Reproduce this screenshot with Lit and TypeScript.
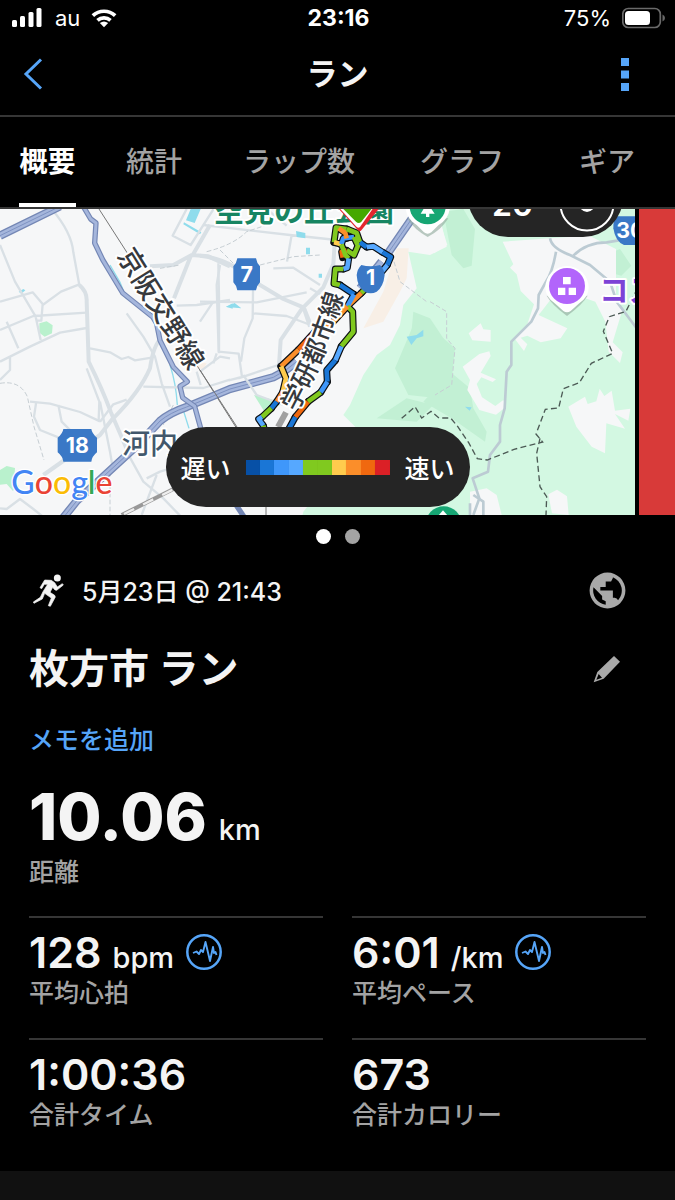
import { LitElement, html, css, svg } from 'lit';
import { customElement, property, state } from 'lit/decorators.js';
import { classMap } from 'lit/directives/class-map.js';

const PACE_COLORS = [
  '#0750a6', '#1a76d6', '#3f97fa', '#56a8ff', '#80c91f',
  '#80c91f', '#ffcb4d', '#fb8e2a', '#f0680f', '#db2026',
];

// [pace colour index, points]
const TRACK: [number, string][] = [
  [4, '440,72 408,68 402,112'],
  [6, '402,112 424,118'],
  [2, '424,118 430,100 462,96'],
  [4, '462,96 474,122 462,150 440,136'],
  [8, '440,136 425,140 428,158'],
  [7, '416,70 436,84 440,100'],
  [4, '440,72 470,84 480,112'],
  [1, '480,112 500,126'],
  [3, '500,126 520,124 548,142'],
  [1, '548,142 572,156 562,180'],
  [3, '562,180 534,214'],
  [4, '534,214 484,264'],
  [7, '484,264 442,304'],
  [4, '424,118 436,150 446,160'],
  [3, '446,160 442,188 430,192'],
  [4, '430,192 406,192 402,236 420,240'],
  [1, '420,240 462,268'],
  [2, '462,268 442,304'],
  [4, '442,304 458,320 460,380 424,424'],
  [3, '424,424 406,466'],
  [1, '406,466 380,496 382,530'],
  [2, '382,530 362,562'],
  [4, '362,562 324,590'],
  [8, '324,590 286,636'],
  [1, '286,636 262,680'],
  [7, '442,304 400,350 345,380'],
  [8, '345,380 296,434'],
  [7, '296,434 243,484'],
  [6, '243,484 258,520 248,562'],
  [7, '248,562 230,590'],
  [1, '230,590 214,610'],
  [4, '214,610 186,636'],
  [3, '186,636 176,642 190,662'],
  [4, '190,662 196,684'],
];

@customElement('activity-map')
export class ActivityMap extends LitElement {
  static styles = css`
    :host {
      display: block;
      height: 306px;
    }
    svg {
      display: block;
      width: 100%;
      height: 100%;
      font-family: Inter, 'Noto Sans CJK JP', sans-serif;
    }
    .land { fill: #f6f7f8; }
    .forest { fill: #d3f8e2; }
    .forest-dark { fill: #c2f0d4; }
    .park { fill: #b9f1cd; }
    .sand { fill: #f8efe6; }
    .water { fill: #8fdcec; }
    .stream { fill: none; stroke: #8fdcec; stroke-width: 4; }
    .road { fill: none; stroke: #d9e0e5; stroke-width: 7; stroke-linejoin: round; }
    .road.wide { stroke-width: 12; }
    .road.hill { stroke: #bccbd3; stroke-width: 8; }
    .highway { fill: none; stroke: #7487b5; stroke-width: 25; stroke-linejoin: round; }
    .highway.fill { stroke: #a5b6dc; stroke-width: 17; }
    .highway.thin { stroke-width: 16; }
    .highway.thin.fill { stroke-width: 9; }
    .median { fill: none; stroke: #7f93c2; stroke-width: 3; }
    .rail { fill: none; stroke: #777; stroke-width: 3; }
    .border { fill: none; stroke: #4c5a55; stroke-width: 4; stroke-dasharray: 18 10; }
    .trail { fill: none; stroke: #c6ced3; stroke-width: 3; stroke-dasharray: 14 7; }
    .outline { fill: none; stroke: #0b0f14; stroke-width: 21; stroke-linejoin: round; stroke-linecap: round; }
    .track { fill: none; stroke-width: 14; stroke-linejoin: round; }
    .label {
      font-weight: 500;
      fill: #36393d;
      stroke: #fff;
      stroke-width: 12;
      stroke-linejoin: round;
      paint-order: stroke;
    }
    .label.rail-name { font-size: 82px; text-anchor: middle; }
    .label.line-name { font-size: 76px; }
    .label.town { font-size: 84px; fill: #42586c; }
    .label.place { font-size: 90px; font-weight: 700; fill: #178562; }
    .label.shop { font-size: 88px; font-weight: 700; fill: #7c43d6; }
    .shield { fill: #3a78c6; }
    .number { font-size: 64px; font-weight: 700; fill: #fff; text-anchor: middle; }
    .logo {
      font-family: Lato, sans-serif;
      font-size: 96px;
      font-weight: 500;
      stroke: #fff;
      stroke-width: 8;
      paint-order: stroke;
    }
    .b { fill: #4285f4; }
    .r { fill: #ea4335; }
    .y { fill: #fbbc05; }
    .g { fill: #34a853; }
    .white { fill: #fff; }
    .poi { fill: #16a673; }
    .poi.purple { fill: #b265fb; }
    .pin-shadow { fill: #8fa89b; opacity: 0.6; }
    .pin-edge { fill: #e3262f; }
    .pin { fill: #45a800; }
  `;

  private _west() {
    return svg`
      <path class="park" d="M118 355l22-6 18 12-2 24-22 10-16-12zM0 795l20-12 25 6-2 30 15 28-20 10-18-20-20 2zM762 570l40 10 50 14-30 14-30 10z" />
      <path class="water" d="M572 12h30l-18 42-26-8zM552 52l52 30-4 6-50-30zM56 260l14-8 6 4-12 10zM678 305l20-10v16z" />
      <path class="stream" d="M330 180l30 52 20 50M510 480q18 55 22 120M545 600l22 70" />
      <path class="road" d="M155 12q60 70 65 130l18 98M0 120l45 110 62 105 15 70M0 290l98-28 30 35-4 50-16 0M0 375l100-42 160-10M128 300l55-40 55-22M20 350l35 80M0 470l30-15v40l-30 30M30 455l60-30 90-42 80-14M90 590l60 6 90 25 60 28M108 595l-6 40 18 40 70 28M175 600l10 50 40 40M270 430l60 12 35 20 20-6 20 10 50-8M380 325l50 70 35 60 20 80 25 70M300 650l40-52 40-14M430 545l180 4 80-25M0 910l20 2 40-30 40 30 50 40M380 740l50 90 60 50 50 52M440 820l40-20 50-15M560 12l-42 80 54 28 70-110M655 175l2 100v170M530 302l60-2 100-15M600 500l60-45 30 5M590 500l12 40" />
      <path class="road" d="M260 490l38 100-2 55M300 590l30 150 10 60M425 930l45-120" />
      <path class="road wide" d="M238 240q24 20 22 50l6 180q40 80 66 150l56 130M340 640q80-80 110-150 10-70 34-90M130 810l170-120 40-52M450 184l70-4 55-30 50 4 65 30M572 154l-50 126M630 60l-54 94" />
      <path class="trail" d="M0 535q60-10 82 40l20 90 30 100M520 600l-30 60M330 800v130M480 190l60-10" />
      <path class="rail" d="M297 12l90 140M590 480l120 190" />
      <path class="highway" d="M0 92L180 4M190 938l40-50 180-165 70-75q30-25 80-42l130-54 130-35q40-20 70-47" />
      <path class="highway fill" d="M0 92L180 4M190 938l40-50 180-165 70-75q30-25 80-42l130-54 130-35q40-20 70-47" />
      <path class="median" d="M0 92L180 4M190 938l40-50 180-165 70-75q30-25 80-42l130-54 130-35q40-20 70-47" />
      <path class="highway thin" d="M252 8l20 34 16 12-4 60 24 50 60 100 90 72 12 20 10 50 40 80 42 44-22 14 8 34 36 26 22 80" />
      <path class="highway thin fill" d="M252 8l20 34 16 12-4 60 24 50 60 100 90 72 12 20 10 50 40 80 42 44-22 14 8 34 36 26 22 80" />
      <path d="M365 930l160-80" stroke="#999" stroke-width="12" />
      <path d="M372 927l150-75" stroke="#eee" stroke-width="7" stroke-dasharray="34 30" />
    `;
  }

  private _town() {
    return svg`
      <path class="road" d="M60 180l-10 60 6 200 60 6 10 70-40 10M0 290l170 2 150-30M10 60l260 30 140 15M275 90l-14 80M160 190l-2 150-25 60-10 70M50 445l-10 30M160 325l100 8 80 30M235 480l-60 20-60 20M315 310l28 70M220 190l60-2 80 52M200 12l60 50M330 250l70 40M130 510l40 60 80 30M0 350l40-60" />
      <path class="road wide" d="M0 152q90 10 150 70l100 60 60 25 60-60 30-70 6-90M310 305l-68 100-6 90M310 305l20 60" />
      <path class="trail" d="M20 140q80-20 120-60l60-20M60 135l60 60 160-40 80-5M570 130l30 100 80 60" />
      <path class="water" d="M288 78l28 6 0 16-26-4zM318 128h12v20h-12zM78 306l26-12 20 16zM356 206h10v12h-10z" />
      <path class="highway" d="M560 150L650 20M545 170L480 250" />
      <path class="highway fill" d="M560 150L650 20M545 170L480 250" />
      <path class="median" d="M560 150L650 20" />
      <path d="M258 622l-24 44" stroke="#a0a0a0" stroke-width="18" />
      <path class="rail" d="M0 495l120 185M198 905v30" />
      <path class="highway thin" d="M105 895l30 45" />
    `;
  }

  private _hills() {
    return svg`
      <path class="forest-dark" d="M40 20l60-8 35 60-10 110-25 8-35-40zM480 160l40-8 50-20 34 50-30 30-50-14zM-50 360l90 40 35 30-10 100-40 50-90-10-40-80zM-20 590l80-90 60 50 10 60 40 70-5 30-100-70zM-160 640l90-60 80 20-50 50z" />
      <path class="water" d="M-70 395l30-5 20-16 0 20-20 6-16 20zM105 605l20 2-6 10zM130 905l30 4-6 20-20-8z" />
      <path class="land" d="M218 110l140-10 120-8 80 40 0 150 20 30-30 100 30 30-8 32-34-34-10-90-30-60-30-10-20 10-10-70-40 20-70 90 86 40-20 30-60 12-40-20-20 6 20 20-10 20-30-40 40-40 20-60-40-40-12-50-20-20 10-10z" />
      <path class="land" d="M116 385l36-30 8 18 22 2v35l-55-4zM98 485l50-38 30-8 4 14-30 50 46 20-10 8-34-14-14 20 16 40 40 26 24-18 8 20-30 24-50-14-36-60 8-30zM415 605l50-30 8 22 26-8 10-38 14 22 22-16 10 60 46-6-6 36-40-20 30 44-56-16-4 90-40-20-46-60zM355 868l26-14 30 20 5 56-50-5zM120 930v-70l50-10 30 20 15 60z" />
      <path class="land" d="M-10 70l40-20 22 70-40 25z" />
      <path class="road hill" d="M360 100q5 30 60 50l60 30 60 50 20 60 60 80" />
      <path class="road hill" d="M430 152q40-40 100-40l50-8M378 140q-10 60-30 90l-22 40-2 40-20 40-60 60v70l-14 20-6 110-14 50v50l-30 40-6 50-46 20 20 60-18 50" />
      <path class="road hill" d="M130 870l30 20 0 40M120 895v35" />
      <path class="trail" d="M0 290l50 30 0 80 25 30-10 110-50 30" />
      <path class="border" d="M-85 640l40-35 20 34 28-20 24 20 35 0 20 24 34 50 26 48 30 4 80-32 86-22-20-24 28-74 40-4 14-58 48-18 36-58 64-30-28-66 18-44 50-16 30-60M330 700l-10 45 10 100 20 30-2 55" />
    `;
  }

  private _pins() {
    return svg`
      <path class="pin-shadow" d="M1640 272q14 26 61 61 47-35 62-61z" />
      <path class="white" d="M1636 248a65 65 0 1 1 130 0q0 28-30 48l-24 22q-11 8-22 0l-24-22q-30-20-30-48z" />
      <circle class="poi purple" cx="1701" cy="243" r="54" />
      <path class="white" d="M1689 216h23v22h-23zM1674 248h22v22h-22zM1706 248h22v22h-22z" />
      <path class="pin-shadow" d="M1222 40q20 34 61 56 40-20 62-56z" />
      <path class="white" d="M1216 0q0 40 34 60l22 22q11 8 22 0l22-22q34-20 34-60z" />
      <circle class="poi" cx="1283" cy="4" r="54" />
      <path class="white" d="M1262 26l20-32 22 32h-16v10h-10v-10z" />
      <path class="pin-edge" d="M1006 0l68 76q5 6 10 0l62-76z" />
      <path class="white" d="M1010 0l60 66q5 5 10 0l46-66z" />
      <path class="pin" d="M1018 0l50 50q8 8 16 0l40-50z" />
      <circle class="poi" cx="1331" cy="958" r="54" />
      <path class="white" d="M1315 932l14-16 14 16z" />
    `;
  }

  render() {
    return html`
      <svg viewBox="0 12 1905 918" preserveAspectRatio="xMidYMid slice" role="img" aria-label="Map">
        <rect class="land" x="-600" width="3200" height="960" />
        <path class="sand" d="M1190 130l36 0-6 90-20 40-50 90-60 20 60-110zM590 470l30 5-10 18-20-4z" />
        <path class="forest" d="M1225 140l65 10 50-25-15-65 20-60H2600v960H900l10-40 160-200 0-50-40-40 20-30 40-90 40-60 40-30 30-60 10-60 40-50z" />
        <path class="forest-dark" d="M1240 320l50 20 40 60 30 60-10 90-50 10-60-40-10-90z" />
        <g transform="translate(1290 0)">${this._hills()}</g>
        ${this._west()}
        <g transform="translate(600 0)">${this._town()}</g>
        <text class="label place" x="642" y="47">空見の丘公園</text>
        <g transform="translate(600 0)">
          ${TRACK.map(([, points]) => svg`<polyline class="outline" points=${points} />`)}
          ${TRACK.map(([pace, points]) => svg`
            <polyline class="track" stroke=${PACE_COLORS[pace]} points=${points} />
          `)}
        </g>
        ${this._pins()}
        <text class="label rail-name" transform="translate(458 326) rotate(58)">京阪交野線</text>
        <path id="line-name" fill="none" d="M888 622Q988 440 1034 258" />
        <text class="label line-name"><textPath href="#line-name">学研都市線</textPath></text>
        <text class="label town" x="366" y="748">河内</text>
        <text class="label shop" x="1798" y="288">コス</text>
        <path class="shield" d="M712 160h56q2 14 12 24v48q-10 10-12 24h-56q-2-14-12-24v-48q10-10 12-24z" />
        <text class="number" x="740" y="231">7</text>
        <path class="shield" d="M190 672h84q2 14 17 26v44q-15 12-17 28h-84q-2-16-17-28v-44q15-12 17-26z" />
        <text class="number" x="232" y="743">18</text>
        <path class="shield" d="M1084 180q28 8 56 0 12 12 14 30-4 36-24 50-18 10-36 0-22-14-24-50 2-18 14-30z" />
        <text class="number" x="1112" y="240">1</text>
        <path class="shield" d="M1846 34h92v86h-66q-26-10-32-50 0-24 6-36z" />
        <text class="number" x="1912" y="98">306</text>
        <text class="logo" x="34" y="868"><tspan class="b">G</tspan><tspan class="r">o</tspan><tspan class="y">o</tspan><tspan class="b">g</tspan><tspan class="g">l</tspan><tspan class="r">e</tspan></text>
      </svg>
    `;
  }
}

@customElement('stat-item')
export class StatItem extends LitElement {
  @property() value = '';
  @property() unit = '';
  @property() label = '';
  @property({ type: Boolean }) chart = false;

  static styles = css`
    :host {
      display: block;
      padding: 10px 0 28px;
      border-top: 2px solid #363636;
    }
    .value {
      display: flex;
      align-items: baseline;
      gap: 11px;
      height: 48px;
      line-height: 48px;
      color: #f4f4f4;
      font-size: 43px;
      font-weight: 600;
    }
    .unit {
      font-size: 29px;
      font-weight: 500;
      line-height: 29px;
    }
    .label {
      color: #a3a3a3;
      font-size: 25px;
      font-weight: 500;
      line-height: 34px;
    }
    button {
      align-self: center;
      display: flex;
      padding: 0;
      border: none;
      background: none;
      cursor: pointer;
    }
    svg {
      display: block;
      fill: none;
      stroke: #56a5f8;
      stroke-width: 2.5;
      stroke-linejoin: round;
    }
  `;

  render() {
    return html`
      <div class="value">
        <span>${this.value}</span>
        ${this.unit ? html`<span class="unit">${this.unit}</span>` : ''}
        ${this.chart
          ? html`
              <button aria-label=${this.label}>
                <svg width="38" height="38" viewBox="0 0 38 38">
                  <circle cx="19" cy="19" r="16.700" />
                  <path d="M8 20l3.500-1.500 2.500 2.500 2-4 2 2 2.500-10 4.500 19 3-14 1 6 1.500-1 1 3" stroke-width="1.900" />
                </svg>
              </button>
            `
          : ''}
      </div>
      <div class="label">${this.label}</div>
    `;
  }
}

@customElement('app-root')
export class AppRoot extends LitElement {
  @state() private _tab = 0;

  private _tabs = ['概要', '統計', 'ラップ数', 'グラフ', 'ギア'];

  static styles = css`
    :host {
      display: flex;
      flex-direction: column;
      min-height: 100vh;
      background: #000;
      color: #f4f4f4;
      font-family: Inter, 'Noto Sans CJK JP', sans-serif;
    }
    svg {
      display: block;
    }
    button {
      padding: 0;
      border: none;
      background: none;
      color: inherit;
      font: inherit;
      cursor: pointer;
    }
    .status {
      display: grid;
      grid-template-columns: 1fr auto 1fr;
      align-items: center;
      height: 36px;
      padding: 0 10px 0 12px;
      color: #fff;
      font-size: 22px;
    }
    .status strong {
      font-size: 23px;
      font-weight: 700;
    }
    .status-side {
      display: flex;
      align-items: center;
      gap: 11px;
    }
    .status-side.end {
      justify-content: flex-end;
    }
    header {
      display: grid;
      grid-template-columns: 1fr auto 1fr;
      align-items: center;
      height: 75px;
      padding: 0 45px 4px 23px;
      border-bottom: 2px solid #363636;
    }
    header h1 {
      margin: 0 0 0 22px;
      font-size: 31px;
      font-weight: 700;
      line-height: 40px;
    }
    .more {
      justify-self: end;
    }
    nav {
      display: grid;
      grid-template-columns: 95fr 118fr 172fr 154fr 136fr;
      justify-items: center;
      height: 90px;
      border-bottom: 2px solid #363636;
    }
    .tab {
      border-bottom: 4px solid transparent;
      color: #a3a3a3;
      font-size: 28px;
      font-weight: 500;
      white-space: nowrap;
    }
    .tab.active {
      border-color: #fff;
      color: #fff;
      font-weight: 700;
    }
    .carousel {
      display: flex;
      gap: 4px;
      overflow: hidden;
    }
    .slide {
      position: relative;
      flex: 0 0 calc(100% - 40px);
      overflow: hidden;
    }
    .slide.next {
      background: #d83a39;
    }
    .pill {
      position: absolute;
      box-sizing: border-box;
      display: flex;
      align-items: center;
      height: 80px;
      border-radius: 40px;
      background: #252525;
      color: #fff;
      white-space: nowrap;
    }
    .legend {
      left: 50%;
      bottom: 8px;
      gap: 15px;
      padding: 0 15px;
      transform: translateX(-50%);
      font-size: 25px;
      font-weight: 500;
    }
    .scale {
      display: grid;
      grid-template-columns: repeat(10, 1fr);
      width: 144px;
      height: 15px;
    }
    .weather {
      top: -52px;
      right: 12px;
      gap: 26px;
      padding: 14px 8px 0 24px;
      font-size: 32px;
      font-weight: 600;
    }
    .dots {
      display: flex;
      justify-content: center;
      gap: 14px;
      padding: 14px 0;
    }
    .dot {
      width: 15px;
      height: 15px;
      border-radius: 50%;
      background: #a3a3a3;
    }
    .dot.active {
      background: #fff;
    }
    main {
      padding: 0 29px;
    }
    .row {
      display: flex;
      align-items: center;
      justify-content: space-between;
    }
    .when {
      display: flex;
      align-items: center;
      gap: 17px;
      height: 64px;
      font-size: 25px;
      font-weight: 500;
    }
    h2 {
      margin: 0;
      font-size: 40px;
      font-weight: 700;
      line-height: 94px;
    }
    .icon {
      display: flex;
      justify-content: center;
      width: 44px;
      margin-right: 17px;
    }
    .note {
      display: block;
      width: fit-content;
      margin: 7px 0 28px;
      color: #56a5f8;
      font-size: 25px;
      font-weight: 500;
      line-height: 34px;
      text-decoration: none;
    }
    .distance {
      display: flex;
      align-items: baseline;
      gap: 12px;
      height: 64px;
      font-size: 64px;
      font-weight: 800;
      line-height: 64px;
    }
    .distance small {
      font-size: 29px;
      font-weight: 500;
      line-height: 29px;
    }
    .label {
      margin: 6px 0 27px;
      color: #a3a3a3;
      font-size: 25px;
      font-weight: 500;
      line-height: 34px;
    }
    .stats {
      display: grid;
      grid-template-columns: 1fr 1fr;
      column-gap: 29px;
      padding-bottom: 11px;
    }
    footer {
      flex: 1;
      min-height: 29px;
      background: #111;
    }
  `;

  private _renderStatus() {
    return html`
      <div class="status">
        <div class="status-side">
          <svg width="32" height="20" viewBox="0 0 32 20" fill="#fff">
            <rect y="12" width="5" height="7" rx="1.500" />
            <rect x="8" y="8" width="5" height="11" rx="1.500" />
            <rect x="16.500" y="4" width="5" height="15" rx="1.500" />
            <rect x="24.500" width="5" height="19" rx="1.500" />
          </svg>
          <span>au</span>
          <svg width="26" height="20" viewBox="0 0 28 20" fill="none" stroke="#fff" stroke-width="4">
            <path d="M2 7.500a17.500 17.500 0 0 1 24 0M7 12.500a10.500 10.500 0 0 1 14 0" />
            <path d="M9.500 15.500q4.500-3.500 9 0L14 20z" fill="#fff" stroke="none" />
          </svg>
        </div>
        <strong>23:16</strong>
        <div class="status-side end">
          <span>75%</span>
          <svg width="43" height="22" viewBox="0 0 43 22">
            <rect x=".8" y="1.500" width="37.500" height="19" rx="5.500" fill="none" stroke="#6a6a6a" stroke-width="1.700" />
            <rect x="3" y="4" width="25" height="14" rx="3.500" fill="#fff" />
            <path d="M40.500 7.500q2.500 1 2.500 3.500t-2.500 3.500z" fill="#6a6a6a" />
          </svg>
        </div>
      </div>
    `;
  }

  render() {
    return html`
      ${this._renderStatus()}
      <header>
        <button aria-label="Back">
          <svg width="20" height="32" viewBox="0 0 20 32" fill="none" stroke="#56a5f8" stroke-width="3">
            <path d="M18 1.500L3 16l15 14.500" />
          </svg>
        </button>
        <h1>ラン</h1>
        <button class="more" aria-label="More">
          <svg width="10" height="34" viewBox="0 0 10 34" fill="#56a5f8">
            <path d="M1 1h8v8H1zM1 13.500h8v8H1zM1 26h8v8H1z" />
          </svg>
        </button>
      </header>
      <nav>
        ${this._tabs.map((name, i) => html`
          <button
            class=${classMap({ tab: true, active: i === this._tab })}
            @click=${() => (this._tab = i)}
          >${name}</button>
        `)}
      </nav>
      <div class="carousel">
        <div class="slide">
          <activity-map></activity-map>
          <div class="pill weather">
            <span>20</span>
            <svg width="56" height="56" viewBox="0 0 56 56" fill="none" stroke="#fff">
              <circle cx="28" cy="28" r="26.500" stroke-width="2" />
              <path d="M22 31q6 7 12 0" stroke-width="3" />
            </svg>
          </div>
          <div class="pill legend">
            <span>遅い</span>
            <div class="scale">
              ${PACE_COLORS.map((color) => html`<i style="background:${color}"></i>`)}
            </div>
            <span>速い</span>
          </div>
        </div>
        <div class="slide next"></div>
      </div>
      <div class="dots">
        <span class="dot active"></span>
        <span class="dot"></span>
      </div>
      <main>
        <div class="row">
          <div class="when">
            <svg width="36" height="37" viewBox="87 170 108 111" fill="#f4f4f4">
              <circle cx="172" cy="188" r="10.500" />
              <path
                d="M134 194l20 1 10 7 8 13 15-10 3 4-20 16-5-1-7-8-8 15 14 9 2 5-15 28-6-2 9-23-20-14-7 17-25 13-2-4 21-14 8-17 14-22-10 0-8 13-5-3z"
                stroke="#f4f4f4"
                stroke-width="2"
                stroke-linejoin="round"
              />
            </svg>
            <span>5月23日 @ 21:43</span>
          </div>
          <span class="icon">
            <svg width="43" height="43" viewBox="0 0 24 24" fill="#a9a9a9">
              <path d="M12 2a10 10 0 1 0 0 20 10 10 0 0 0 0-20zm-1 17.900A8 8 0 0 1 4.200 10.200L9 15v2l2 1zm6.900-2.500q-.6-1.400-1.900-1.400h-1v-4H8v-2h3V7h3l1-2v-.4a8 8 0 0 1 2.900 12.800z" />
            </svg>
          </span>
        </div>
        <div class="row">
          <h2>枚方市 ラン</h2>
          <button class="icon" aria-label="Edit">
            <svg width="28" height="28" viewBox="100 317 84 84" fill="#a9a9a9">
              <path fill-rule="evenodd" d="M113 368l50-48 18 17-49 51-30 11zM117 374l-7 17 17-6z" />
            </svg>
          </button>
        </div>
        <a class="note" href="#">メモを追加</a>
        <div class="distance"><span>10.06</span><small>km</small></div>
        <div class="label">距離</div>
        <div class="stats">
          <stat-item value="128" unit="bpm" label="平均心拍" chart></stat-item>
          <stat-item value="6:01" unit="/km" label="平均ペース" chart></stat-item>
          <stat-item value="1:00:36" label="合計タイム"></stat-item>
          <stat-item value="673" label="合計カロリー"></stat-item>
        </div>
      </main>
      <footer></footer>
    `;
  }
}
